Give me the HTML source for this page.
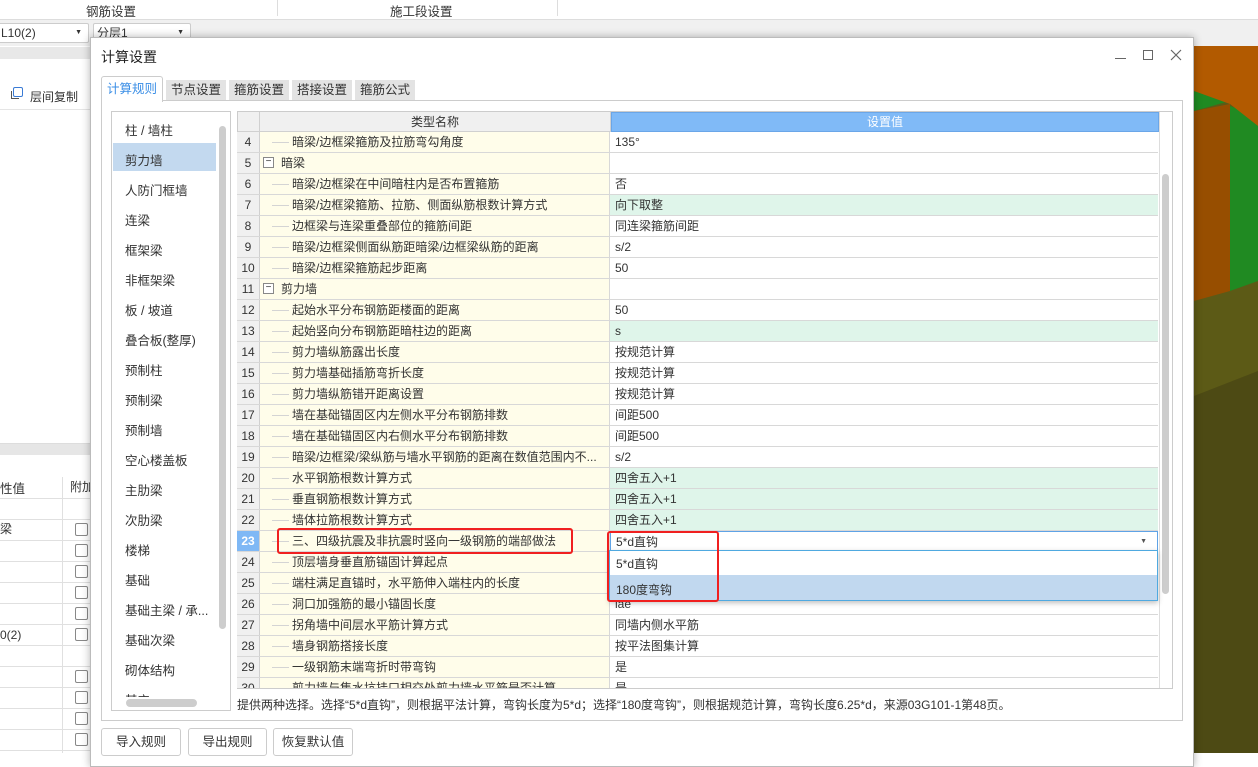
<!DOCTYPE html>
<html><head><meta charset="utf-8">
<style>
*{box-sizing:border-box;margin:0;padding:0}
body{width:1258px;height:753px;overflow:hidden;position:relative;background:#fff;font-family:"Liberation Sans","Noto Sans CJK SC",sans-serif;font-size:12px;color:#333}
.a{position:absolute}
.row{position:absolute;left:237px;width:921px;height:21px;border-bottom:1px solid #d8d8d8}
.row .n{position:absolute;left:0;width:23px;height:20px;background:#f0f0f0;border-right:1px solid #d0d0d0;text-align:center;line-height:20px;color:#333}
.row .k{position:absolute;left:23px;width:350px;height:20px;background:#fffdea;border-right:1px solid #d8d8d8;line-height:20px;white-space:nowrap;overflow:hidden}
.row .k span{position:absolute;left:32px}
.row .k i{position:absolute;left:12px;top:10px;width:17px;height:1px;background:#d4d4d4}
.row .k b{position:absolute;left:3px;top:4px;width:11px;height:11px;border:1px solid #888;font-weight:normal;font-size:10px;line-height:8px;text-align:center;background:#fff}
.row .k b+span{left:21px}
.row .v{position:absolute;left:373px;width:548px;height:20px;line-height:20px;padding-left:5px;background:#fff}
.row .v.g{background:#dff5ea}
.li{position:absolute;left:125px;font-size:12.5px;color:#333}
.btn{position:absolute;top:728px;height:28px;border:1px solid #ccc;border-radius:3px;background:#fff;text-align:center;line-height:26px;font-size:12.5px}
</style></head><body>
<div class="a" style="left:0;top:0;width:1258px;height:20px;background:#fff;border-bottom:1px solid #ddd"></div>
<div class="a" style="left:86px;top:1px;font-size:12.5px">钢筋设置</div>
<div class="a" style="left:390px;top:1px;font-size:12.5px">施工段设置</div>
<div class="a" style="left:277px;top:0;width:1px;height:16px;background:#ddd"></div>
<div class="a" style="left:557px;top:0;width:1px;height:16px;background:#ddd"></div>
<div class="a" style="left:0;top:20px;width:1258px;height:26px;background:#f0f0f0"></div>
<div class="a" style="left:-4px;top:23px;width:93px;height:20px;background:#fff;border:1px solid #ccc;border-radius:2px;line-height:18px;padding-left:4px">L10(2)<span style="position:absolute;right:6px;font-size:7px">▼</span></div>
<div class="a" style="left:93px;top:23px;width:98px;height:20px;background:#fff;border:1px solid #ccc;border-radius:2px;line-height:18px;padding-left:3px">分层1<span style="position:absolute;right:6px;font-size:7px">▼</span></div>
<div class="a" style="left:0;top:47px;width:90px;height:12px;background:#e8e8e8"></div>
<div class="a" style="left:0;top:80px;width:90px;height:30px;border-bottom:1px solid #e5e5e5"></div>
<div class="a" style="left:11px;top:91px;width:8px;height:8px;border-left:1.5px solid #555;border-bottom:1.5px solid #555"></div>
<div class="a" style="left:13px;top:87px;width:10px;height:10px;border:1.5px solid #3a7bd5;border-radius:2px;background:#fff"></div>
<div class="a" style="left:30px;top:88px">层间复制</div>
<div class="a" style="left:0;top:443px;width:90px;height:12px;background:#e6e6e6;border-top:1px solid #ddd"></div>
<div class="a" style="left:0;top:478px;font-size:12.5px">性值</div>
<div class="a" style="left:70px;top:478px">附加</div>
<div class="a" style="left:62px;top:477px;width:1px;height:276px;background:#e0e0e0"></div>
<div class="a" style="left:0;top:520px;font-size:12px">梁</div>
<div class="a" style="left:0;top:628px">0(2)</div>
<div class="a" style="left:0;top:498px;width:90px;height:1px;background:#e0e0e0;box-shadow:0 21px 0 #e0e0e0,0 42px 0 #e0e0e0,0 63px 0 #e0e0e0,0 84px 0 #e0e0e0,0 105px 0 #e0e0e0,0 126px 0 #e0e0e0,0 147px 0 #e0e0e0,0 168px 0 #e0e0e0,0 189px 0 #e0e0e0,0 210px 0 #e0e0e0,0 231px 0 #e0e0e0,0 252px 0 #e0e0e0"></div>
<div class="a" style="left:75px;top:523px;width:13px;height:13px;border:1px solid #888;border-radius:2px"></div>
<div class="a" style="left:75px;top:544px;width:13px;height:13px;border:1px solid #888;border-radius:2px"></div>
<div class="a" style="left:75px;top:565px;width:13px;height:13px;border:1px solid #888;border-radius:2px"></div>
<div class="a" style="left:75px;top:586px;width:13px;height:13px;border:1px solid #888;border-radius:2px"></div>
<div class="a" style="left:75px;top:607px;width:13px;height:13px;border:1px solid #888;border-radius:2px"></div>
<div class="a" style="left:75px;top:628px;width:13px;height:13px;border:1px solid #888;border-radius:2px"></div>
<div class="a" style="left:75px;top:670px;width:13px;height:13px;border:1px solid #888;border-radius:2px"></div>
<div class="a" style="left:75px;top:691px;width:13px;height:13px;border:1px solid #888;border-radius:2px"></div>
<div class="a" style="left:75px;top:712px;width:13px;height:13px;border:1px solid #888;border-radius:2px"></div>
<div class="a" style="left:75px;top:733px;width:13px;height:13px;border:1px solid #888;border-radius:2px"></div>
<!-- 3D scene -->
<svg class="a" style="left:1194px;top:46px" width="64" height="707">
<rect width="64" height="707" fill="#4d4a14"/>
<polygon points="0,0 64,0 64,325 0,350" fill="#5c5a16"/>
<polygon points="36,60 64,70 64,235 36,245" fill="#208a22"/>
<polygon points="0,65 36,58 36,245 0,255" fill="#974e00"/>
<polygon points="0,45 36,55 0,65" fill="#1f8a22"/>
<polygon points="0,0 64,0 64,80 36,58 0,45" fill="#b25a00"/>
</svg>
<!-- dialog -->
<div class="a" style="left:90px;top:37px;width:1104px;height:730px;background:#fff;border:1px solid #bbb;box-shadow:0 0 8px rgba(0,0,0,.3)"></div>
<div class="a" style="left:101px;top:47px;font-size:14px;color:#222">计算设置</div>
<div class="a" style="left:1115px;top:58px;width:11px;height:1px;background:#666"></div>
<div class="a" style="left:1143px;top:50px;width:10px;height:10px;border:1px solid #666"></div>
<svg class="a" style="left:1170px;top:49px" width="12" height="12"><path d="M1 1L11 11M11 1L1 11" stroke="#666" stroke-width="1.2"/></svg>
<div class="a" style="left:101px;top:100px;width:1082px;height:621px;border:1px solid #ccc"></div>
<div class="a" style="left:101px;top:76px;width:62px;height:26px;background:#fff;border:1px solid #ccc;border-bottom:none;border-radius:3px 3px 0 0;color:#3a8ee6;text-align:center;line-height:24px;font-size:12.5px">计算规则</div>
<div class="a" style="left:166px;top:80px;width:60px;height:20px;background:#e3e3e3;text-align:center;line-height:20px;font-size:12.5px">节点设置</div>
<div class="a" style="left:229px;top:80px;width:60px;height:20px;background:#e3e3e3;text-align:center;line-height:20px;font-size:12.5px">箍筋设置</div>
<div class="a" style="left:292px;top:80px;width:60px;height:20px;background:#e3e3e3;text-align:center;line-height:20px;font-size:12.5px">搭接设置</div>
<div class="a" style="left:355px;top:80px;width:60px;height:20px;background:#e3e3e3;text-align:center;line-height:20px;font-size:12.5px">箍筋公式</div>
<div class="a" style="left:111px;top:111px;width:120px;height:600px;border:1px solid #ccc;background:#fff"></div>
<div class="a" style="left:113px;top:143px;width:103px;height:28px;background:#c3d9ef"></div>
<div class="a" style="left:219px;top:126px;width:7px;height:503px;background:#cdcdcd;border-radius:4px"></div>
<div class="a" style="left:126px;top:699px;width:71px;height:8px;background:#cdcdcd;border-radius:4px"></div>
<div class="li" style="top:120px">柱 / 墙柱</div>
<div class="li" style="top:150px">剪力墙</div>
<div class="li" style="top:180px">人防门框墙</div>
<div class="li" style="top:210px">连梁</div>
<div class="li" style="top:240px">框架梁</div>
<div class="li" style="top:270px">非框架梁</div>
<div class="li" style="top:300px">板 / 坡道</div>
<div class="li" style="top:330px">叠合板(整厚)</div>
<div class="li" style="top:360px">预制柱</div>
<div class="li" style="top:390px">预制梁</div>
<div class="li" style="top:420px">预制墙</div>
<div class="li" style="top:450px">空心楼盖板</div>
<div class="li" style="top:480px">主肋梁</div>
<div class="li" style="top:510px">次肋梁</div>
<div class="li" style="top:540px">楼梯</div>
<div class="li" style="top:570px">基础</div>
<div class="li" style="top:600px">基础主梁 / 承...</div>
<div class="li" style="top:630px">基础次梁</div>
<div class="li" style="top:660px">砌体结构</div>
<div class="a" style="left:111px;top:690px;width:119px;height:7px;overflow:hidden"><div class="li" style="left:14px;top:0">其它</div></div>
<div class="a" style="left:237px;top:111px;width:936px;height:578px;border:1px solid #ccc;overflow:hidden;background:#fff">
<div class="a" style="left:0;top:0;width:22px;height:20px;background:#f0f0f0;border-right:1px solid #d0d0d0;border-bottom:1px solid #d0d0d0"></div>
<div class="a" style="left:22px;top:0;width:351px;height:20px;background:#f0f0f0;border-right:1px solid #d0d0d0;border-bottom:1px solid #d0d0d0;text-align:center;line-height:20px">类型名称</div>
<div class="a" style="left:373px;top:0;width:548px;height:20px;background:#80baf7;border:1px solid #6aa6e8;text-align:center;line-height:18px;color:#fff">设置值</div>
<div class="a" style="left:921px;top:0;width:14px;height:578px;background:#fff;border-left:1px solid #ddd"></div>
<div class="a" style="left:924px;top:62px;width:7px;height:420px;background:#cdcdcd;border-radius:4px"></div>
</div>
<div class="row" style="top:132px"><div class="n">4</div><div class="k"><i></i><span>暗梁/边框梁箍筋及拉筋弯勾角度</span></div><div class="v">135°</div></div>
<div class="row" style="top:153px"><div class="n">5</div><div class="k"><b>−</b><span>暗梁</span></div><div class="v"></div></div>
<div class="row" style="top:174px"><div class="n">6</div><div class="k"><i></i><span>暗梁/边框梁在中间暗柱内是否布置箍筋</span></div><div class="v">否</div></div>
<div class="row" style="top:195px"><div class="n">7</div><div class="k"><i></i><span>暗梁/边框梁箍筋、拉筋、侧面纵筋根数计算方式</span></div><div class="v g">向下取整</div></div>
<div class="row" style="top:216px"><div class="n">8</div><div class="k"><i></i><span>边框梁与连梁重叠部位的箍筋间距</span></div><div class="v">同连梁箍筋间距</div></div>
<div class="row" style="top:237px"><div class="n">9</div><div class="k"><i></i><span>暗梁/边框梁侧面纵筋距暗梁/边框梁纵筋的距离</span></div><div class="v">s/2</div></div>
<div class="row" style="top:258px"><div class="n">10</div><div class="k"><i></i><span>暗梁/边框梁箍筋起步距离</span></div><div class="v">50</div></div>
<div class="row" style="top:279px"><div class="n">11</div><div class="k"><b>−</b><span>剪力墙</span></div><div class="v"></div></div>
<div class="row" style="top:300px"><div class="n">12</div><div class="k"><i></i><span>起始水平分布钢筋距楼面的距离</span></div><div class="v">50</div></div>
<div class="row" style="top:321px"><div class="n">13</div><div class="k"><i></i><span>起始竖向分布钢筋距暗柱边的距离</span></div><div class="v g">s</div></div>
<div class="row" style="top:342px"><div class="n">14</div><div class="k"><i></i><span>剪力墙纵筋露出长度</span></div><div class="v">按规范计算</div></div>
<div class="row" style="top:363px"><div class="n">15</div><div class="k"><i></i><span>剪力墙基础插筋弯折长度</span></div><div class="v">按规范计算</div></div>
<div class="row" style="top:384px"><div class="n">16</div><div class="k"><i></i><span>剪力墙纵筋错开距离设置</span></div><div class="v">按规范计算</div></div>
<div class="row" style="top:405px"><div class="n">17</div><div class="k"><i></i><span>墙在基础锚固区内左侧水平分布钢筋排数</span></div><div class="v">间距500</div></div>
<div class="row" style="top:426px"><div class="n">18</div><div class="k"><i></i><span>墙在基础锚固区内右侧水平分布钢筋排数</span></div><div class="v">间距500</div></div>
<div class="row" style="top:447px"><div class="n">19</div><div class="k"><i></i><span>暗梁/边框梁/梁纵筋与墙水平钢筋的距离在数值范围内不...</span></div><div class="v">s/2</div></div>
<div class="row" style="top:468px"><div class="n">20</div><div class="k"><i></i><span>水平钢筋根数计算方式</span></div><div class="v g">四舍五入+1</div></div>
<div class="row" style="top:489px"><div class="n">21</div><div class="k"><i></i><span>垂直钢筋根数计算方式</span></div><div class="v g">四舍五入+1</div></div>
<div class="row" style="top:510px"><div class="n">22</div><div class="k"><i></i><span>墙体拉筋根数计算方式</span></div><div class="v g">四舍五入+1</div></div>
<div class="row" style="top:531px"><div class="n" style="background:#7fb8f5;color:#fff;font-weight:bold">23</div><div class="k"><i></i><span>三、四级抗震及非抗震时竖向一级钢筋的端部做法</span></div><div class="v" style="border:1px solid #5fa3e6">5*d直钩<span style="position:absolute;right:10px;font-size:7px;color:#555">▼</span></div></div>
<div class="row" style="top:552px"><div class="n">24</div><div class="k"><i></i><span>顶层墙身垂直筋锚固计算起点</span></div><div class="v"></div></div>
<div class="row" style="top:573px"><div class="n">25</div><div class="k"><i></i><span>端柱满足直锚时，水平筋伸入端柱内的长度</span></div><div class="v"></div></div>
<div class="row" style="top:594px"><div class="n">26</div><div class="k"><i></i><span>洞口加强筋的最小锚固长度</span></div><div class="v">lae</div></div>
<div class="row" style="top:615px"><div class="n">27</div><div class="k"><i></i><span>拐角墙中间层水平筋计算方式</span></div><div class="v">同墙内侧水平筋</div></div>
<div class="row" style="top:636px"><div class="n">28</div><div class="k"><i></i><span>墙身钢筋搭接长度</span></div><div class="v">按平法图集计算</div></div>
<div class="row" style="top:657px"><div class="n">29</div><div class="k"><i></i><span>一级钢筋末端弯折时带弯钩</span></div><div class="v">是</div></div>
<div class="a" style="left:237px;top:678px;width:921px;height:10px;overflow:hidden"><div class="row" style="top:0;left:0"><div class="n">30</div><div class="k"><i></i><span>剪力墙与集水坑挂口相交处剪力墙水平筋是否计算</span></div><div class="v">是</div></div></div>
<div class="a" style="left:609px;top:550px;width:549px;height:51px;background:#fff;border:1px solid #4fa9e0;box-shadow:0 2px 5px rgba(0,0,0,.25)"></div>
<div class="a" style="left:610px;top:575px;width:547px;height:25px;background:#c1d8ef"></div>
<div class="a" style="left:616px;top:555px">5*d直钩</div>
<div class="a" style="left:616px;top:581px">180度弯钩</div>
<div class="a" style="left:277px;top:528px;width:296px;height:26px;border:2px solid #f02020;border-radius:3px"></div>
<div class="a" style="left:607px;top:531px;width:112px;height:71px;border:2px solid #f02020;border-radius:3px"></div>
<div class="a" style="left:237px;top:696px;white-space:nowrap">提供两种选择。选择“5*d直钩”，则根据平法计算，弯钩长度为5*d；选择“180度弯钩”，则根据规范计算，弯钩长度6.25*d，来源03G101-1第48页。</div>
<div class="btn" style="left:101px;width:80px">导入规则</div>
<div class="btn" style="left:188px;width:79px">导出规则</div>
<div class="btn" style="left:273px;width:80px">恢复默认值</div>
</body></html>
